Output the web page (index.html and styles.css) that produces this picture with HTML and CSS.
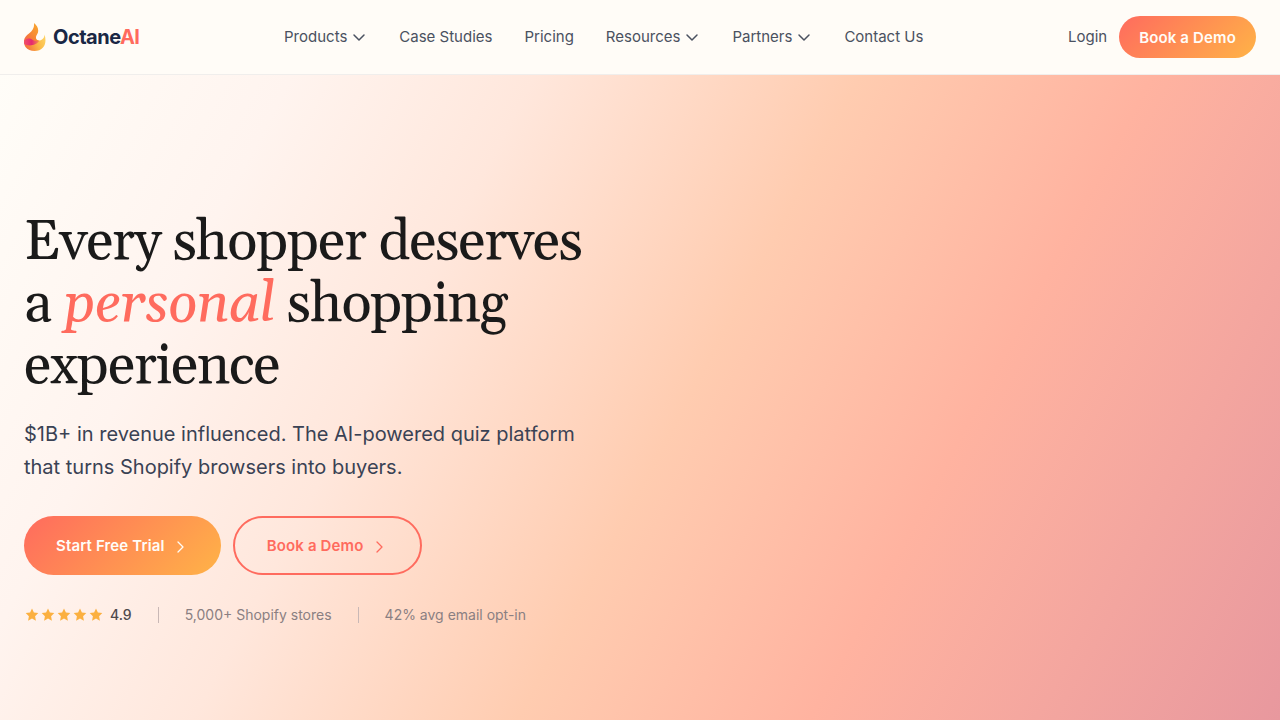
FILE: index.html
```html
<!DOCTYPE html>
<html lang="en">
<head>
<meta charset="UTF-8">
<meta name="viewport" content="width=device-width, initial-scale=1.0">
<title>Octane AI</title>
<link rel="stylesheet" href="styles.css">
</head>
<body>

<!-- Header -->
<header class="header">
    <a class="logo" href="#">
        <svg class="logo-icon" viewBox="0 0 22 30" aria-hidden="true">
            <defs>
                <linearGradient id="flame-top" x1="1" y1="0" x2="0" y2="1">
                    <stop offset="0" stop-color="#f9ab2c"/>
                    <stop offset="0.5" stop-color="#f78a34"/>
                    <stop offset="1" stop-color="#f2604a"/>
                </linearGradient>
                <linearGradient id="flame-base" x1="0" y1="0.3" x2="1" y2="0">
                    <stop offset="0" stop-color="#f4763c"/>
                    <stop offset="0.5" stop-color="#fbb845"/>
                    <stop offset="1" stop-color="#fed666"/>
                </linearGradient>
                <linearGradient id="flame-mid" x1="0" y1="0" x2="1" y2="0">
                    <stop offset="0" stop-color="#f0506a"/>
                    <stop offset="0.5" stop-color="#e52a6f"/>
                    <stop offset="1" stop-color="#f7964a"/>
                </linearGradient>
            </defs>
            <path fill="url(#flame-base)" d="M0 18.5C3 17 11 17 15 18.5C18 18.5 20.5 16 20.5 12.5C22 17 22 22 19 25.5C15 30.5 5 30 1.5 25C0 23 0 20 0 18.5Z"/>
            <path fill="url(#flame-top)" d="M10 1C14 4 15.5 9 13 12.5C11 15.5 12 18.5 15 18.5C11 21 4 22 0 20.5C-0.5 17 1.5 14 5 11.5C9 8.5 10.5 5 10 1Z"/>
            <path fill="url(#flame-mid)" d="M0 19.5C2 15.5 6 16 8.5 17.8C10.5 19.2 12.5 19.5 15.5 18.5C13 23 5 25 0.2 22Z"/>
        </svg>
        <span class="logo-text">Octane<span class="logo-accent">AI</span></span>
    </a>

    <nav class="nav">
        <button class="nav-item" type="button">Products <svg class="chevron" viewBox="0 0 16 16" aria-hidden="true"><path d="M3 6L8 11L13 6"/></svg></button>
        <a class="nav-item" href="#">Case Studies</a>
        <a class="nav-item" href="#">Pricing</a>
        <button class="nav-item" type="button">Resources <svg class="chevron" viewBox="0 0 16 16" aria-hidden="true"><path d="M3 6L8 11L13 6"/></svg></button>
        <button class="nav-item" type="button">Partners <svg class="chevron" viewBox="0 0 16 16" aria-hidden="true"><path d="M3 6L8 11L13 6"/></svg></button>
        <a class="nav-item" href="#">Contact Us</a>
    </nav>

    <div class="header-actions">
        <a class="nav-item" href="#">Login</a>
        <a class="btn btn-small" href="#">Book a Demo</a>
    </div>
</header>

<!-- Hero -->
<main class="hero">
    <div class="hero-content">
        <h1>Every shopper deserves a <em>personal</em> shopping experience</h1>
        <p class="hero-text">$1B+ in revenue influenced. The AI-powered quiz platform that turns Shopify browsers into buyers.</p>

        <div class="hero-buttons">
            <a class="btn btn-primary" href="#">Start Free Trial <svg class="arrow" viewBox="0 0 16 16" aria-hidden="true"><path d="M5 4L10 9L5 14"/></svg></a>
            <a class="btn btn-outline" href="#">Book a Demo <svg class="arrow" viewBox="0 0 16 16" aria-hidden="true"><path d="M5 4L10 9L5 14"/></svg></a>
        </div>

        <div class="stats">
            <div class="rating">
                <svg class="stars" viewBox="0 0 80 16" aria-hidden="true">
                    <defs>
                        <path id="star" d="M8 1.5L9.9 5.5L14.3 6.1L11.1 9.2L11.9 13.7L8 11.5L4.1 13.7L4.9 9.2L1.7 6.1L6.1 5.5Z"/>
                    </defs>
                    <use href="#star"/>
                    <use href="#star" x="16"/>
                    <use href="#star" x="32"/>
                    <use href="#star" x="48"/>
                    <use href="#star" x="64"/>
                </svg>
                <span class="score">4.9</span>
            </div>
            <span class="divider"></span>
            <span>5,000+ Shopify stores</span>
            <span class="divider"></span>
            <span>42% avg email opt-in</span>
        </div>
    </div>
</main>

</body>
</html>
```
FILE: styles.css
```css
/* Reset */
* {
    box-sizing: border-box;
    margin: 0;
    padding: 0;
}

body {
    display: flex;
    flex-direction: column;
    min-height: 100vh;
    font-family: Inter, sans-serif;
    color: #1a1a1a;
    background: #fffcf7;
}

a {
    color: inherit;
    text-decoration: none;
}

/* Header */
.header {
    display: flex;
    align-items: center;
    justify-content: space-between;
    padding: 16px 24px;
    background: #fffcf7;
    border-bottom: 1px solid #f0eeec;
}

.logo {
    display: flex;
    align-items: center;
    gap: 7px;
}

.logo-icon {
    width: 22px;
    height: 30px;
}

.logo-text {
    font-size: 20px;
    font-weight: 700;
    letter-spacing: -0.5px;
    color: #1a2744;
}

.logo-accent {
    color: #ff6b5e;
}

.nav {
    display: flex;
    align-items: center;
    gap: 32px;
}

.nav-item {
    display: flex;
    align-items: center;
    gap: 4px;
    font-family: inherit;
    font-size: 15px;
    line-height: 24px;
    color: #4a5160;
    background: none;
    border: none;
    cursor: pointer;
}

.chevron {
    width: 16px;
    height: 16px;
    fill: none;
    stroke: currentColor;
    stroke-width: 1.5;
    stroke-linecap: round;
    stroke-linejoin: round;
}

.header-actions {
    display: flex;
    align-items: center;
    gap: 12px;
}

/* Buttons */
.btn {
    display: inline-flex;
    align-items: center;
    gap: 8px;
    font-size: 15px;
    font-weight: 600;
    letter-spacing: 0.01em;
    color: #fffcf7;
    border-radius: 30px;
}

.btn-small,
.btn-primary {
    background: linear-gradient(135deg, #ff6b5e, #ffb347);
}

.btn-small {
    height: 42px;
    padding: 0 20px;
}

.btn-primary,
.btn-outline {
    height: 59px;
    padding: 0 32px;
}

.btn-outline {
    color: #ff6b5e;
    border: 2px solid #ff6b5e;
}

.arrow {
    width: 16px;
    height: 16px;
    fill: none;
    stroke: currentColor;
    stroke-width: 1.3;
    stroke-linecap: round;
    stroke-linejoin: round;
}

/* Hero */
.hero {
    flex: 1;
    display: flex;
    align-items: center;
    padding: 64px 24px 24px;
    background: linear-gradient(118deg, #fffdf8 0%, #fff4ef 18%, #ffe7dc 33%, #ffccb0 53%, #ffb3a0 71%, #e8989e 100%);
}

.hero-content {
    max-width: 592px;
}

h1 {
    font-family: Georgia, Gelasio, "Liberation Serif", serif;
    font-size: 56px;
    font-weight: 400;
    line-height: 62px;
    letter-spacing: -0.02em;
    margin-bottom: 20px;
}

h1 em {
    color: #ff6b5e;
}

.hero-text {
    font-size: 20px;
    line-height: 33px;
    color: #3a4254;
    margin-bottom: 32px;
}

.hero-buttons {
    display: flex;
    gap: 12px;
    margin-bottom: 32px;
}

/* Rating and stats */
.stats {
    display: flex;
    align-items: center;
    gap: 26px;
    font-size: 14px;
    line-height: 16px;
    color: #8a7f82;
}

.rating {
    display: flex;
    align-items: center;
    gap: 6px;
}

.stars {
    width: 80px;
    height: 16px;
    fill: #fbb040;
}

.score {
    font-weight: 500;
    color: #4f4a4c;
}

.divider {
    width: 1px;
    height: 16px;
    background: #c9b8b6;
}
```
